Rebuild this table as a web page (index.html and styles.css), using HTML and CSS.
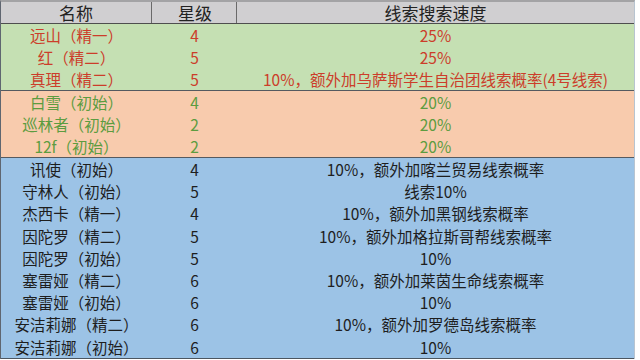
FILE: index.html
```html
<!DOCTYPE html>
<html lang="zh-CN">
<head>
<meta charset="utf-8">
<link rel="stylesheet" href="styles.css">
</head>
<body>
<div class="sheet">
  <div class="row head">
    <div class="c c1">名称</div>
    <div class="c c2">星级</div>
    <div class="c c3">线索搜索速度</div>
  </div>
  <div class="group green">
    <div class="row red"><div class="c">远山（精一）</div><div class="c">4</div><div class="c">25%</div></div>
    <div class="row red"><div class="c">红（精二）</div><div class="c">5</div><div class="c">25%</div></div>
    <div class="row red"><div class="c">真理（精二）</div><div class="c">5</div><div class="c">10%，额外加乌萨斯学生自治团线索概率(4号线索)</div></div>
  </div>
  <div class="group orange">
    <div class="row grn"><div class="c">白雪（初始）</div><div class="c">4</div><div class="c">20%</div></div>
    <div class="row grn"><div class="c">巡林者（初始）</div><div class="c">2</div><div class="c">20%</div></div>
    <div class="row grn"><div class="c">12f（初始）</div><div class="c">2</div><div class="c">20%</div></div>
  </div>
  <div class="group blue">
    <div class="row"><div class="c">讯使（初始）</div><div class="c">4</div><div class="c">10%，额外加喀兰贸易线索概率</div></div>
    <div class="row"><div class="c">守林人（初始）</div><div class="c">5</div><div class="c">线索10%</div></div>
    <div class="row"><div class="c">杰西卡（精一）</div><div class="c">4</div><div class="c">10%，额外加黑钢线索概率</div></div>
    <div class="row"><div class="c">因陀罗（精二）</div><div class="c">5</div><div class="c">10%，额外加格拉斯哥帮线索概率</div></div>
    <div class="row"><div class="c">因陀罗（初始）</div><div class="c">5</div><div class="c">10%</div></div>
    <div class="row"><div class="c">塞雷娅（精二）</div><div class="c">6</div><div class="c">10%，额外加莱茵生命线索概率</div></div>
    <div class="row"><div class="c">塞雷娅（初始）</div><div class="c">6</div><div class="c">10%</div></div>
    <div class="row"><div class="c">安洁莉娜（精二）</div><div class="c">6</div><div class="c">10%，额外加罗德岛线索概率</div></div>
    <div class="row"><div class="c">安洁莉娜（初始）</div><div class="c">6</div><div class="c">10%</div></div>
  </div>
</div>
</body>
</html>
```

FILE: styles.css
```css
html, body {
  margin: 0;
  padding: 0;
  background: #ffffff;
}
body {
  width: 640px;
  height: 360px;
  overflow: hidden;
  font-family: "Noto Sans CJK SC", "Noto Sans", sans-serif;
  color: #1e1e1e;
}
.sheet {
  width: 633px;
  border-top: 2px solid #a3a3a5;
  border-left: 1px solid #5f6670;
  border-right: 1px solid #b8c4d0;
}
.row {
  display: grid;
  grid-template-columns: 151px 85px 1fr;
  height: 22px;
  font-size: 15.5px;
  line-height: 23px;
}
.c {
  text-align: center;
  white-space: nowrap;
}
.head {
  height: 21px;
  line-height: 21px;
  font-size: 17px;
  background: #d0cfd1;
  border-bottom: 1px solid #4e4e4e;
  color: #222;
}
.head .c1, .head .c2 {
  border-right: 1px solid #6a6a6a;
}
.head .c2 {
  padding-left: 2px;
}
.group {
  border-bottom: 1px solid #555a60;
}
.green { background: #c5e0b3; }
.orange { background: #f8cbad; }
.blue {
  background: #9cc3e6;
  border-bottom: 1px solid #4c5660;
}
.blue .row {
  height: 22.2px;
  line-height: 23px;
}
.red { color: #cc3d2a; }
.grn { color: #5c9c40; }
```
